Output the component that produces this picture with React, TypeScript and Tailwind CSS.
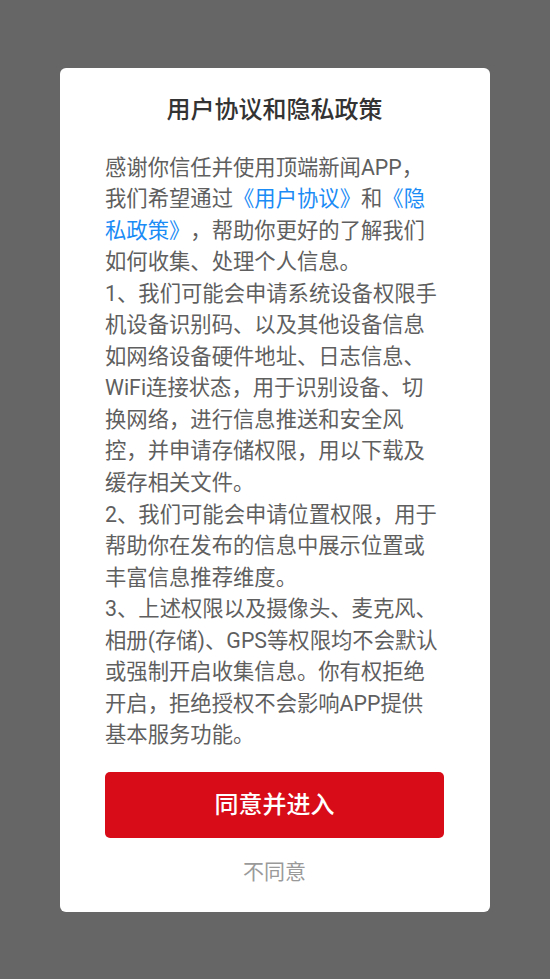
export default function App() {
  return (
    <div
      className="flex h-[979px] w-full items-center justify-center bg-[#666666] [text-spacing-trim:space-all]"
      style={{ fontFamily: 'Roboto, "Noto Sans CJK SC", sans-serif' }}
    >
      <div className="flex h-[844px] w-[430px] flex-col rounded-[6px] bg-white pl-[45px] pr-[46px] pt-[26px]">
        {/* Title */}
        <h1 className="text-center text-[24px] font-medium leading-[32px] text-[#333333]">
          用户协议和隐私政策
        </h1>

        {/* Body */}
        <div className="mt-[26px] w-[335px] text-[21.33px] leading-[31.55px] text-[#5f5f5f]">
          <p>感谢你信任并使用顶端新闻APP，</p>
          <p>
            我们希望通过<span className="text-[#1b8cf5]">《用户协议》</span>和<span className="text-[#1b8cf5]">《隐私政策》</span>，帮助你更好的了解我们如何收集、处理个人信息。
          </p>
          <p>
            1、我们可能会申请系统设备权限手机设备识别码、以及其他设备信息如网络设备硬件地址、日志信息、WiFi连接状态，用于识别设备、切换网络，进行信息推送和安全风控，并申请存储权限，用以下载及缓存相关文件。
          </p>
          <p>2、我们可能会申请位置权限，用于帮助你在发布的信息中展示位置或丰富信息推荐维度。</p>
          <p>
            3、上述权限以及摄像头、麦克风、相册(存储)、GPS等权限均不会默认或强制开启收集信息。你有权拒绝开启，拒绝授权不会影响APP提供基本服务功能。
          </p>
        </div>

        {/* Actions */}
        <button className="mt-[21px] h-[66px] w-[339px] rounded-[5px] bg-[#d80c18] text-[24px] font-medium text-white">
          同意并进入
        </button>
        <button className="mt-[19px] text-center text-[21px] leading-[31px] text-[#9a9a9a]">
          不同意
        </button>
      </div>
    </div>
  );
}
